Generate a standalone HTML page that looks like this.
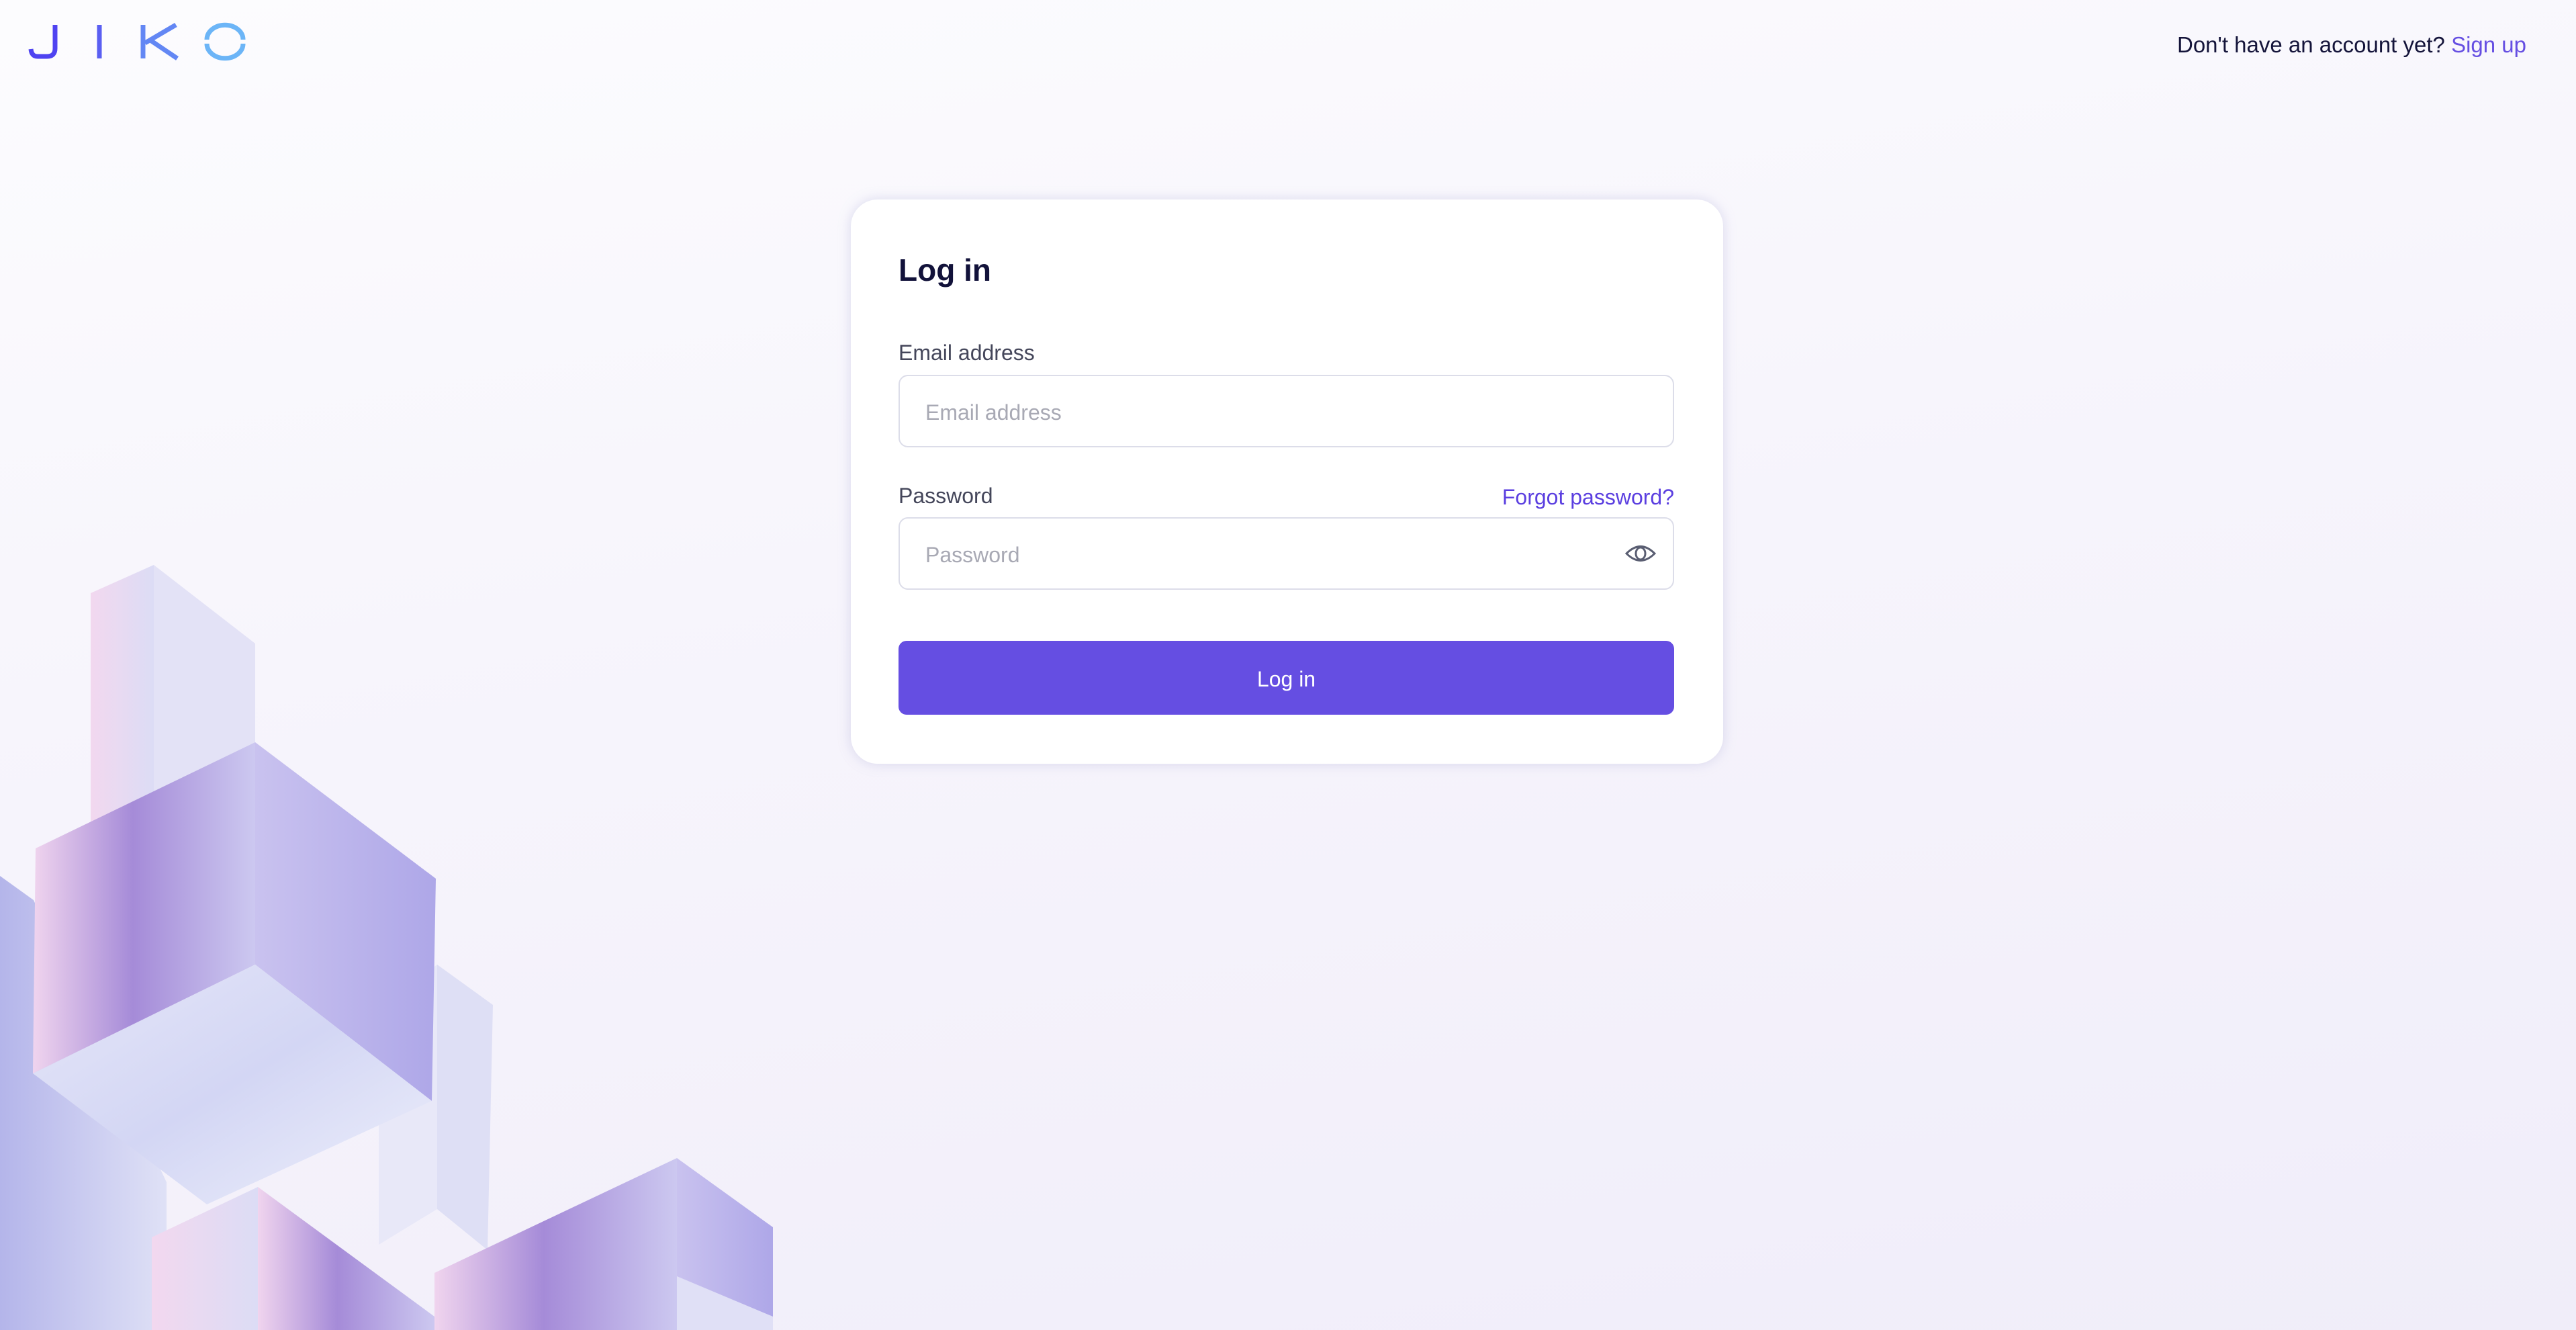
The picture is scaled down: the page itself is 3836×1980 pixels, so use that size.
<!DOCTYPE html>
<html><head><meta charset="utf-8"><style>
*{margin:0;padding:0;box-sizing:border-box}
html,body{width:3836px;height:1980px;overflow:hidden}
body{font-family:"Liberation Sans",sans-serif;background:linear-gradient(170deg,#fcfcfe 0%,#f7f5fc 40%,#f0edf9 100%);position:relative}
.abs{position:absolute}
.hdr{right:74px;top:48px;font-size:33px;color:#14143a;white-space:nowrap}
.hdr a{color:#654ee2;text-decoration:none}
.card{left:1267px;top:297px;width:1299px;height:840px;background:#fff;border-radius:40px;box-shadow:0 0 18px rgba(160,160,210,.35)}
.title{left:71px;top:78px;font-size:46px;font-weight:bold;color:#12123a}
.lbl{font-size:32px;color:#44465a}
.input{left:71px;width:1155px;height:108px;border:2px solid #dcdde9;border-radius:14px}
.ph{left:38px;top:36px;font-size:32px;color:#a8a9b4}
.btn{left:71px;top:657px;width:1155px;height:110px;background:#654ee2;border-radius:12px;color:#fff;font-size:32px;text-align:center;line-height:114px}
</style></head><body>
<svg class="abs" style="left:0;top:0" width="420" height="130" viewBox="0 0 420 130">
<g fill="none" stroke-width="7">
<path d="M82 37 V72 Q82 84 70 84 H56 Q47 84 46 73" stroke="#4f43f1"/>
<path d="M148 37 V87" stroke="#5a5ff2"/>
<path d="M213 37 V87 M262 37 L216 64 M224 60 L264 87" stroke="#6387f4"/>
<path d="M308 59 A26 21 0 0 1 362 59 M308 65 A26 21 0 0 0 362 65" stroke="#6cb5f7"/>
</g></svg>
<div class="abs hdr">Don't have an account yet? <a>Sign up</a></div>

<svg class="abs" style="left:0;top:800px" width="1180" height="1180" viewBox="0 800 1180 1180">
<defs>
<linearGradient id="pk" x1="0" x2="1"><stop offset="0" stop-color="#f0d4ee"/><stop offset=".45" stop-color="#a58bd8"/><stop offset="1" stop-color="#ccc8f0"/></linearGradient>
<linearGradient id="rt" x1="0" x2="1"><stop offset="0" stop-color="#c9c2ef"/><stop offset="1" stop-color="#aea7e8"/></linearGradient>
<linearGradient id="bt" x1="0" y1="0" x2="1" y2="1"><stop offset="0" stop-color="#e6e7f8"/><stop offset=".5" stop-color="#d3d6f4"/><stop offset="1" stop-color="#eef0fb"/></linearGradient>
<linearGradient id="pl" x1="0" x2="1"><stop offset="0" stop-color="#f2d8ef"/><stop offset="1" stop-color="#dcdcf5"/></linearGradient>
<linearGradient id="lb" x1="0" x2="1"><stop offset="0" stop-color="#b4b5ea"/><stop offset="1" stop-color="#dfe1f6"/></linearGradient>
</defs>
<polygon points="135,883 229,841 229,1240 135,1240" fill="url(#pl)"/>
<polygon points="229,841 380,958 380,1240 229,1240" fill="#e3e2f6"/>
<polygon points="651,1436 734,1496 726,1861 651,1800" fill="#dedff5"/>
<polygon points="564,1500 651,1436 651,1800 564,1853" fill="#e8e8f8"/>
<polygon points="0,1304 50,1340 248,1760 248,1980 0,1980" fill="url(#lb)"/>
<polygon points="53,1263 380,1105 380,1436 49,1598" fill="url(#pk)"/>
<polygon points="380,1105 649,1308 643,1639 380,1436" fill="url(#rt)"/>
<polygon points="49,1598 380,1436 643,1639 308,1793" fill="url(#bt)"/>
<polygon points="226,1842 384,1767 384,1980 226,1980" fill="url(#pl)"/>
<polygon points="384,1767 647,1960 647,1980 384,1980" fill="url(#pk)"/>
<polygon points="647,1895 1008,1724 1008,1980 647,1980" fill="url(#pk)"/>
<polygon points="1008,1724 1151,1827 1151,1980 1008,1980" fill="url(#rt)"/>
<polygon points="1008,1900 1151,1960 1151,1980 1008,1980" fill="#e0e0f6"/>
</svg>

<div class="abs card">
<div class="abs title">Log in</div>
<div class="abs lbl" style="left:71px;top:210px">Email address</div>
<div class="abs input" style="top:261px"><div class="abs ph">Email address</div></div>
<div class="abs lbl" style="left:71px;top:423px">Password</div>
<div class="abs lbl" style="right:73px;top:425px;color:#5b3fe0">Forgot password?</div>
<div class="abs input" style="top:473px"><div class="abs ph">Password</div>
<svg class="abs" style="right:24px;top:37px" width="48" height="30" viewBox="0 0 48 30"><g fill="none" stroke="#5a5e72" stroke-width="3"><path d="M3 15 Q24 -6 45 15 Q24 36 3 15Z"/><ellipse cx="24" cy="15" rx="7" ry="9"/></g></svg>
</div>
<div class="abs btn">Log in</div>
</div>
</body></html>
